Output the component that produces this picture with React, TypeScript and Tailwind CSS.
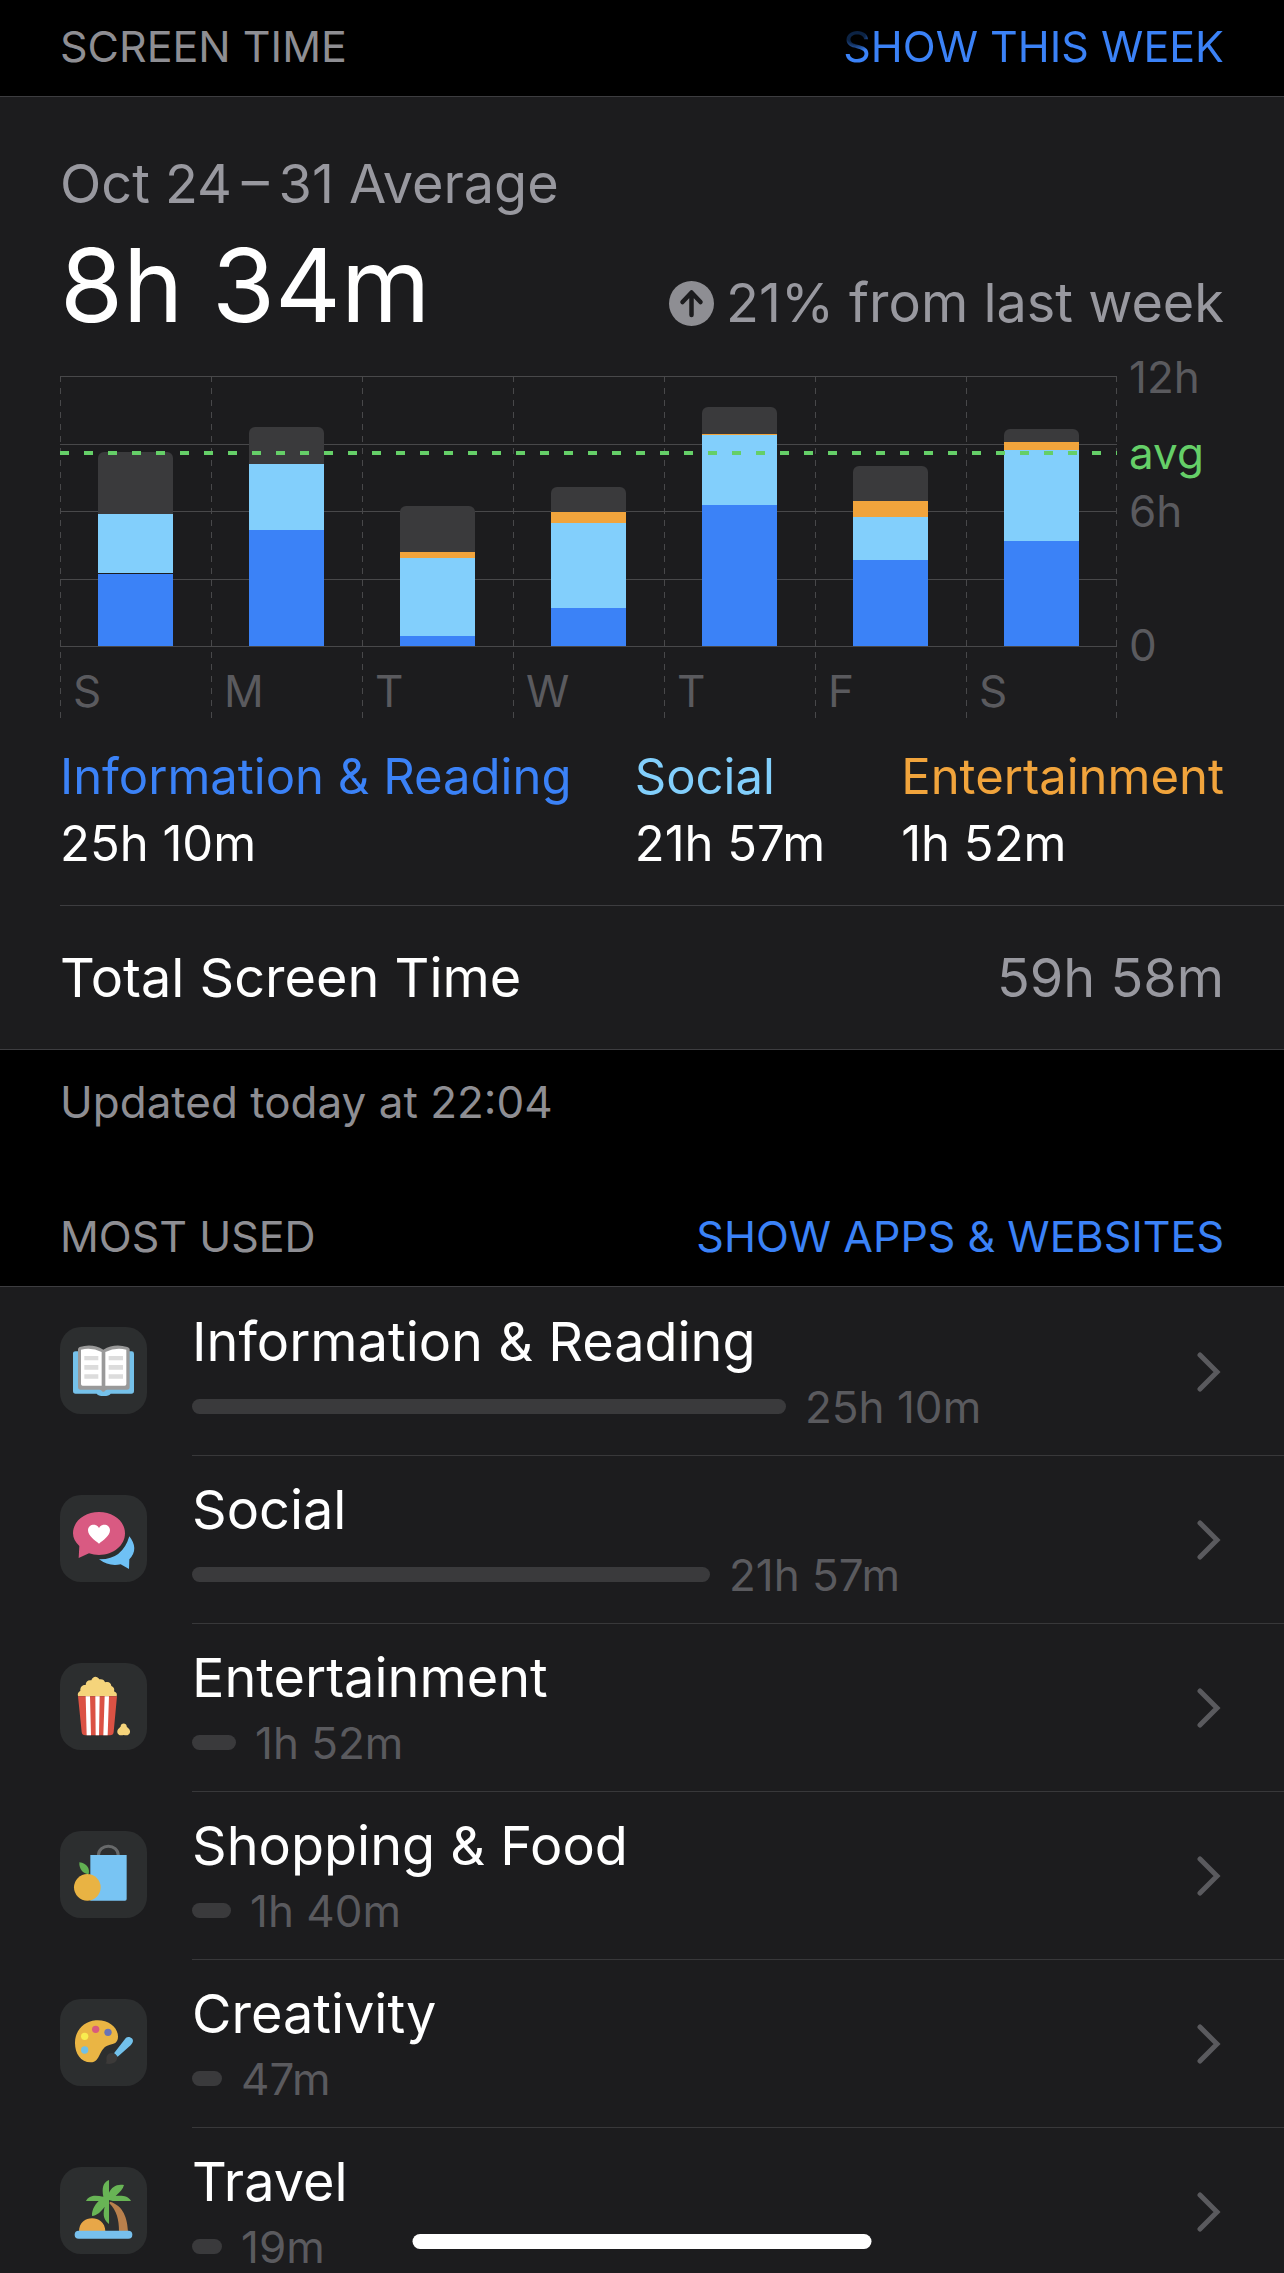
import type { ReactNode } from "react";

type Day = {
  label: string;
  name: string;
  info: number;
  gap?: number;
  social: number;
  fun: number;
  other: number;
};

// Segment sizes in chart units: 270 units stand for 12 hours.
const CHART_UNITS = 270;

const days: Day[] = [
  { label: "S", name: "Sunday", info: 72, gap: 1, social: 59, fun: 0, other: 62 },
  { label: "M", name: "Monday", info: 116, social: 66, fun: 0, other: 37 },
  { label: "T", name: "Tuesday", info: 10, social: 78, fun: 6, other: 46 },
  { label: "W", name: "Wednesday", info: 38, social: 85, fun: 11, other: 25 },
  { label: "T", name: "Thursday", info: 141, social: 70, fun: 1, other: 27 },
  { label: "F", name: "Friday", info: 86, social: 43, fun: 16, other: 35 },
  { label: "S", name: "Saturday", info: 105, social: 91, fun: 8, other: 13 },
];

const pct = (units: number) => `${(units / CHART_UNITS) * 100}%`;

function Segment({ units, className }: { units: number; className: string }) {
  if (!units) return null;
  return <div className={`shrink-0 ${className}`} style={{ height: pct(units) }} />;
}

function DashedRule({ className }: { className: string }) {
  return (
    <div
      className={`absolute inset-y-0 w-px bg-[repeating-linear-gradient(to_bottom,#48484a_0px_6px,transparent_6px_12px)] ${className}`}
    />
  );
}

function Chart() {
  return (
    <div className="mt-8 flex pl-[60px]">
      <div className="relative min-w-0 flex-1">
        <div className="absolute inset-x-0 top-0 flex h-[271px] flex-col justify-between">
          {[0, 1, 2, 3, 4].map((line) => (
            <div key={line} className="h-px bg-[#48484a]" />
          ))}
        </div>
        <div className="grid grid-cols-7">
          {days.map((day) => (
            <div key={day.name} className="relative">
              <DashedRule className="left-0" />
              <div className="relative mx-auto flex h-[270px] w-1/2 flex-col justify-end">
                <Segment units={day.other} className="rounded-t-md bg-[#3a3a3c]" />
                <Segment units={day.fun} className="bg-[#f1a43c]" />
                <Segment units={day.social} className="bg-[#82cffc]" />
                <Segment units={day.gap ?? 0} className="bg-[#1c1c1e]" />
                <Segment units={day.info} className="bg-[#3b82f7]" />
              </div>
              <div className="flex h-[72px] items-center pl-[13px] pt-[18px] text-[44px] leading-none text-[#5a5a5e]">
                {day.label}
              </div>
            </div>
          ))}
        </div>
        <DashedRule className="right-0" />
        <div className="absolute inset-x-0 top-[75px] h-1 bg-[repeating-linear-gradient(to_right,#65cf68_0px_9px,transparent_9px_24px)]" />
      </div>
      <div className="relative flex h-[269px] w-[167px] flex-col justify-between pl-3 text-[44px] leading-none text-[#5a5a5e]">
        <div className="flex h-px items-center">12h</div>
        <div className="flex h-px items-center">6h</div>
        <div className="flex h-px items-center">0</div>
        <div className="absolute top-[76px] flex h-px items-center text-[#65cf68]">avg</div>
      </div>
    </div>
  );
}

function Legend() {
  const items = [
    { name: "Information & Reading", time: "25h 10m", color: "text-[#3b82f7]" },
    { name: "Social", time: "21h 57m", color: "text-[#82cffc]" },
    { name: "Entertainment", time: "1h 52m", color: "text-[#f1a43c]" },
  ];
  return (
    <dl className="mt-[25px] grid grid-cols-[576fr_267fr_auto] px-[60px] pb-7 text-[49px] leading-[67px]">
      {items.map((item) => (
        <div key={item.name}>
          <dt className={item.color}>{item.name}</dt>
          <dd className="text-white">{item.time}</dd>
        </div>
      ))}
    </dl>
  );
}

function BookIcon() {
  return (
    <svg viewBox="30 51 261 261" className="size-full" aria-hidden="true">
      <path d="M77 124h168q7 0 7 7v112q0 8-8 8h-62q-4 7-21 7t-21-7H77q-8 0-8-8V131q0-7 8-7z" fill="#75c1ea" />
      <path
        d="M84 118q0-5 5-7 38-12 71 8 33-20 72-8 7 2 7 7v113q0 8-8 8h-60q-5 1-7 5-4 3-8 0-2-4-7-5H92q-8 0-8-8z"
        fill="#999"
      />
      <path d="M93 119q32-8 62 7v101H98q-5 0-5-5z" fill="#fff" />
      <path d="M229 119q-32-8-63 7v101h58q5 0 5-5z" fill="#fff" />
      <path d="M103 138h42v13h-42zm0 27h42v14h-42zm0 28h42v13h-42zM176 138h43v13h-43zm0 27h43v14h-43zm0 28h43v13h-43z" fill="#dcdcdc" />
    </svg>
  );
}

function ChatIcon() {
  return (
    <svg viewBox="30 45 261 261" className="size-full" aria-hidden="true">
      <path d="M238 169q30 38 0 69l-1 29-25-14q-34 8-65-15 70 2 91-69z" fill="#6fc1f5" />
      <path
        d="M147 96c44 0 78 28 78 64s-34 65-78 65q-16 0-30-5l-31 14 2-36c-12-11-19-23-19-38 0-36 34-64 78-64z"
        fill="#d95a82"
      />
      <path d="M147 191c-12-9-33-24-33-40 0-19 25-23 33-7 8-16 33-12 33 7 0 16-21 31-33 40z" fill="#fff" />
    </svg>
  );
}

function PopcornIcon() {
  return (
    <svg viewBox="30 39 261 261" className="size-full" aria-hidden="true">
      <path
        d="M84 139c-2-9 1-13 7-16-1-11 5-19 16-18 0-11 8-16 17-14 4-13 18-14 24-3 9-2 15 2 17 9 11-4 19 2 19 11 9 4 10 11 8 16 8 3 10 8 8 15z"
        fill="#f5d47b"
      />
      <path d="M84 139h117l-10 107q-1 10-11 10h-74q-10 0-11-10z" fill="#db5244" />
      <path d="M107 139h13l3 117h-13zM136 139h13l-2 117h-10zM164 139h13l-4 117h-13z" fill="#fff" />
      <path
        d="M212 229c0-11 18-11 18 0 0 2 2 3 4 5 11 8 6 22-5 22-3 0-5-1-8-1s-5 1-8 1c-11 0-16-14-5-22 2-2 4-3 4-5z"
        fill="#f5d47b"
      />
    </svg>
  );
}

function ShoppingIcon() {
  return (
    <svg viewBox="30 48 261 261" className="size-full" aria-hidden="true">
      <path d="M145 122c0-38 60-38 60 0" fill="none" stroke="#67696a" strokeWidth="9" />
      <path d="M121 120h109v132q0 5-5 5H121z" fill="#78c4f3" />
      <circle cx="112" cy="217" r="40" fill="#e9b343" />
      <path d="M88 142c23 3 32 18 28 36-18-2-29-16-28-36z" fill="#62b152" />
    </svg>
  );
}

function PaletteIcon() {
  return (
    <svg viewBox="30 42 261 261" className="size-full" aria-hidden="true">
      <path
        d="M137 106c37-3 67 20 67 49 0 16-9 21-24 24-36 8-26 53-58 53-31 0-48-29-47-61 1-35 27-62 62-65z"
        fill="#eab544"
      />
      <circle cx="137" cy="133" r="11" fill="#d95a7d" />
      <circle cx="174" cy="142" r="11" fill="#6a73b4" />
      <circle cx="104" cy="154" r="11" fill="#f8ec4f" />
      <circle cx="104" cy="195" r="11" fill="#71c0e5" />
      <path d="M228 158c10-6 25 3 20 14q-2 5-6 9l-39 34-11-10z" fill="#72c1eb" />
      <path d="M201 214c4 17-15 27-35 21 8-4 0-14 5-23 7-12 26-9 30 2z" fill="#3c3a39" />
    </svg>
  );
}

function IslandIcon() {
  return (
    <svg viewBox="30 51 261 261" className="size-full" aria-hidden="true">
      <path d="M180 155c41 12 52 51 54 89h-27c0-35-7-62-29-84z" fill="#b9804c" />
      <path d="M87 244c0-52 78-52 79 0z" fill="#e8a748" />
      <path
        d="M177 90v38c8-17 23-27 45-23-3 13-13 22-25 33 20-2 38 0 46 15h-55l-11-3v72c-20-17-17-33-13-52-10 14-22 26-38 28-1-15 6-31 20-45h-38c9-19 29-18 52-13-5-25-1-43 17-50z"
        fill="#68b455"
      />
      <rect x="74" y="242" width="173" height="24" rx="12" fill="#77c0ed" />
    </svg>
  );
}

type Category = { name: string; time: string; bar: number; icon: ReactNode };

// Bar lengths are given out of BAR_TRACK, the full text column.
const BAR_TRACK = 1005;

const categories: Category[] = [
  { name: "Information & Reading", time: "25h 10m", bar: 594, icon: <BookIcon /> },
  { name: "Social", time: "21h 57m", bar: 518, icon: <ChatIcon /> },
  { name: "Entertainment", time: "1h 52m", bar: 44, icon: <PopcornIcon /> },
  { name: "Shopping & Food", time: "1h 40m", bar: 39, icon: <ShoppingIcon /> },
  { name: "Creativity", time: "47m", bar: 30, icon: <PaletteIcon /> },
  { name: "Travel", time: "19m", bar: 30, icon: <IslandIcon /> },
];

function CategoryRow({ item, first }: { item: Category; first: boolean }) {
  return (
    <li>
      <a href="#category" className="flex h-[168px] pl-[60px]">
        <span className="mr-[45px] mt-10 size-[87px] shrink-0 overflow-hidden rounded-[21px] bg-[#2c2e2f]">
          {item.icon}
        </span>
        <span
          className={`flex min-w-0 flex-1 items-center border-t pr-[63px] ${
            first ? "border-transparent" : "border-[#38383a]"
          }`}
        >
          <span className="flex h-full min-w-0 flex-1 flex-col pt-[21px]">
            <span className="text-[54px] leading-[66px] text-white">{item.name}</span>
            <span className="flex h-[63px] items-center gap-[19px] text-[44px] leading-none text-[#5a5a5e]">
              <span
                className="h-[15px] shrink-0 rounded-full bg-[#3a3a3c]"
                style={{ width: `${(item.bar / BAR_TRACK) * 100}%` }}
              />
              {item.time}
            </span>
          </span>
          <svg viewBox="0 0 24 40" className="h-10 w-6 shrink-0" aria-hidden="true">
            <path
              d="M3 3l17 17L3 37"
              fill="none"
              stroke="#5a5a5e"
              strokeWidth="5"
              strokeLinecap="round"
              strokeLinejoin="miter"
            />
          </svg>
        </span>
      </a>
    </li>
  );
}

export default function App() {
  return (
    <div className="h-screen overflow-y-auto bg-black font-['Inter',sans-serif] text-[#8e8e93] [scrollbar-width:none]">
      <header className="flex h-24 items-center justify-between px-[60px] pb-1 text-[43px] leading-none">
        <h2>SCREEN TIME</h2>
        <button
          type="button"
          className="bg-[radial-gradient(circle_at_12px_8px,#0c2344_10px,#3b82f7_20px)] bg-clip-text text-transparent"
        >
          SHOW THIS WEEK
        </button>
      </header>

      <section className="border-y border-[#3d3d40] bg-[#1c1c1e]">
        <div className="px-[60px] pt-[54px] text-[54px] leading-[66px] text-[#98989f]">
          <p>Oct 24{"\u2009"}–{"\u2009"}31 Average</p>
          <div className="mt-[9px] flex items-end justify-between">
            <p className="text-[102px] leading-[118px] text-white">8h 34m</p>
            <p className="flex items-center gap-3 pb-2">
              <svg viewBox="0 0 90 90" className="size-[45px]" aria-hidden="true">
                <circle cx="45" cy="45" r="45" fill="#8e8e93" />
                <path
                  d="M45 68V24M27 42l18-19 18 19"
                  fill="none"
                  stroke="#1c1c1e"
                  strokeWidth="9"
                  strokeLinecap="round"
                  strokeLinejoin="round"
                />
              </svg>
              21% from last week
            </p>
          </div>
        </div>
        <Chart />
        <Legend />
        <div className="ml-[60px] flex h-[144px] items-center justify-between border-t border-[#3d3d40] pr-[60px] text-[54px] leading-none">
          <span className="text-white">Total Screen Time</span>
          <span className="text-[#98989f]">59h 58m</span>
        </div>
      </section>

      <p className="flex h-[104px] items-center px-[60px] text-[44px] leading-none">Updated today at 22:04</p>

      <header className="mt-8 flex h-[100px] items-center justify-between px-[60px] text-[43px] leading-none">
        <h2>MOST USED</h2>
        <button type="button" className="text-[#3b82f7]">
          SHOW APPS &amp; WEBSITES
        </button>
      </header>

      <ul className="border-t border-[#3d3d40] bg-[#1c1c1e]">
        {categories.map((item, index) => (
          <CategoryRow key={item.name} item={item} first={index === 0} />
        ))}
      </ul>

      <div className="fixed bottom-6 left-1/2 h-[15px] w-[459px] -translate-x-1/2 rounded-full bg-white" />
    </div>
  );
}
